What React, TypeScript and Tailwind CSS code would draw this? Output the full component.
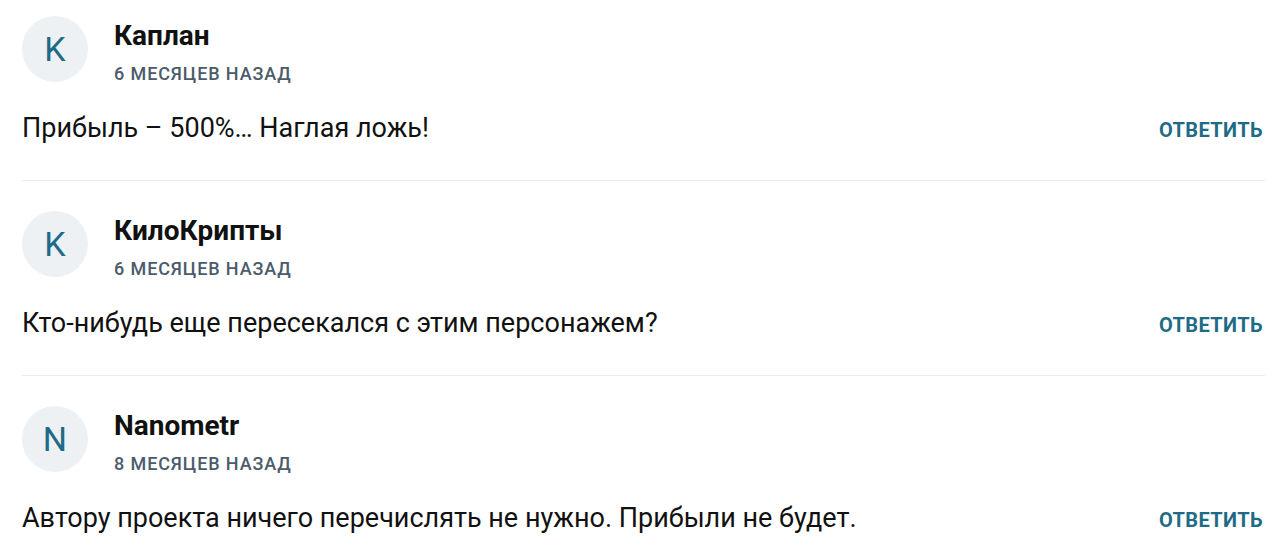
const comments = [
  { initial: "K", name: "Каплан", date: "6 месяцев назад", text: "Прибыль – 500%… Наглая ложь!" },
  { initial: "K", name: "КилоКрипты", date: "6 месяцев назад", text: "Кто-нибудь еще пересекался с этим персонажем?" },
  { initial: "N", name: "Nanometr", date: "8 месяцев назад", text: "Автору проекта ничего перечислять не нужно. Прибыли не будет." },
];

function Comment({ initial, name, date, text, first }: { initial: string; name: string; date: string; text: string; first: boolean }) {
  return (
    <div className={`${first ? "pt-[16px]" : "pt-[30px]"} pb-[32px] border-b border-[#ececec]`}>
      <div className="flex items-start gap-[26px]">
        <div className="w-[66px] h-[66px] rounded-full bg-[#edf1f4] flex items-center justify-center text-[34px] leading-none text-[#1f6b87]">
          {initial}
        </div>
        <div className="pt-[2px]">
          <div className="text-[28px] leading-[36px] font-bold text-[#111]">{name}</div>
          <div className="mt-[8px] text-[18px] leading-[24px] font-medium uppercase tracking-[0.05em] text-[#4b5b6b]">{date}</div>
        </div>
      </div>
      <div className="mt-[24px] flex items-baseline justify-between">
        <div className="text-[27px] leading-[36px] text-[#111]">{text}</div>
        <button className="mr-[2px] text-[20px] leading-[36px] font-bold uppercase tracking-[0.02em] text-[#1f6b87]">Ответить</button>
      </div>
    </div>
  );
}

export default function App() {
  return (
    <div className="w-[1287px] h-[552px] overflow-hidden bg-white px-[22px]" style={{ fontFamily: "Roboto, sans-serif" }}>
      {comments.map((c, i) => (
        <Comment key={i} {...c} first={i === 0} />
      ))}
    </div>
  );
}
